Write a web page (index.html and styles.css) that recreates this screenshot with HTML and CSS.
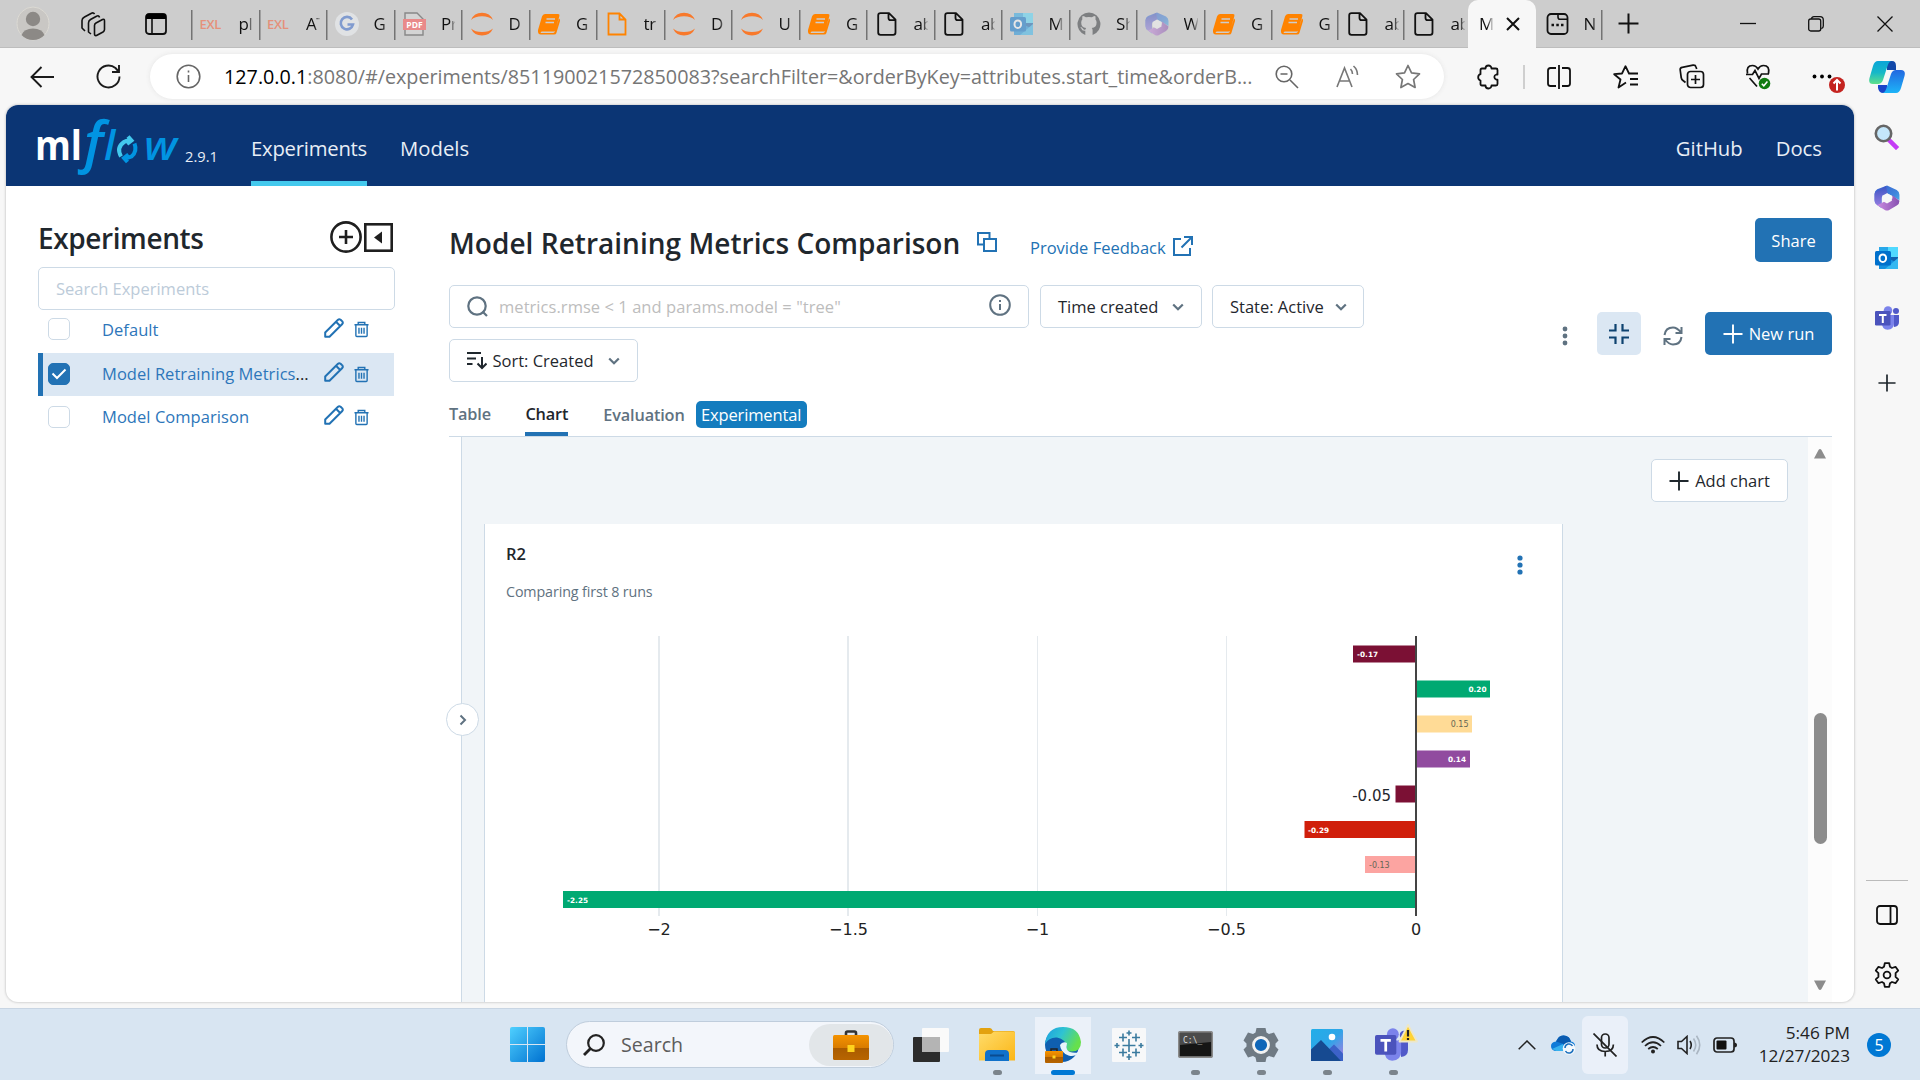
FILE: index.html
```html
<!DOCTYPE html>
<html lang="en">
<head>
<meta charset="utf-8">
<title>MLflow</title>
<link rel="stylesheet" href="styles.css">
</head>
<body>
<svg class="defs" width="0" height="0">
  <defs>
    <linearGradient id="gWin" x1="0" y1="0" x2="1" y2="1"><stop offset="0" stop-color="#4fd0ff"/><stop offset="1" stop-color="#0071d0"/></linearGradient>
    <linearGradient id="gCase" x1="0" y1="0" x2="0" y2="1"><stop offset="0" stop-color="#f59300"/><stop offset=".5" stop-color="#d97c00"/><stop offset=".52" stop-color="#a95b00"/><stop offset="1" stop-color="#b86500"/></linearGradient>
    <linearGradient id="gFold" x1="0" y1="0" x2="1" y2="1"><stop offset="0" stop-color="#ffdc6b"/><stop offset="1" stop-color="#fbb616"/></linearGradient>
    <linearGradient id="gEdge" x1="0" y1="0" x2="1" y2=".4"><stop offset="0" stop-color="#1b9de2"/><stop offset=".5" stop-color="#2fc3d2"/><stop offset="1" stop-color="#66e04c"/></linearGradient>
    <linearGradient id="gPhoto" x1="0" y1="0" x2="1" y2="1"><stop offset="0" stop-color="#22aee8"/><stop offset=".5" stop-color="#2fa5e8"/><stop offset="1" stop-color="#b378e0"/></linearGradient>
    <linearGradient id="gCopA" x1="0" y1="0" x2="0" y2="1"><stop offset="0" stop-color="#0aa5d8"/><stop offset=".5" stop-color="#16b8c8"/><stop offset="1" stop-color="#5fe08a"/></linearGradient>
    <linearGradient id="gCopB" x1="0" y1="0" x2="0" y2="1"><stop offset="0" stop-color="#2268e0"/><stop offset="1" stop-color="#1db4f8"/></linearGradient>
    <linearGradient id="gM1" x1="0" y1="0" x2="1" y2="1"><stop offset="0" stop-color="#3a5cd0"/><stop offset=".6" stop-color="#3f86dc"/><stop offset="1" stop-color="#4cc8f0"/></linearGradient>
    <linearGradient id="gM2" x1="0" y1="0" x2="1" y2="0"><stop offset="0" stop-color="#c98be0"/><stop offset="1" stop-color="#8750b0"/></linearGradient>
    <linearGradient id="gM3" x1="0" y1="0" x2="0" y2="1"><stop offset="0" stop-color="#3b50c0"/><stop offset="1" stop-color="#a77be0"/></linearGradient>
  </defs>
  <symbol id="book" viewBox="0 0 24 24"><path fill="#ff8300" d="M8 2h13q2 0 1.400 2l-4 14q-.5 1.500-2 1.500H5q-2 .3-1.200 1.500h12q1.500 0 2-1.600L22 6.500q1.400 1 1 2.400l-3.600 12Q19 22.500 17 22.500H4Q.5 22.500 1 18L5 4.500Q5.800 2 8 2z"/><path d="M9.500 7h8.500M8.500 10.500h8.500" stroke="#cdcdcd" stroke-width="1.500"/></symbol>
  <symbol id="jup" viewBox="0 0 24 24"><path fill="#f8792b" d="M1 8Q4 .8 12 .8T23 8Q19 4.300 12 4.300T1 8zM1 16.500Q4 23.500 12 23.500T23 16.500Q19 20 12 20T1 16.500z"/></symbol>
  <symbol id="file" viewBox="0 0 24 24"><path fill="none" stroke="currentColor" stroke-width="1.800" stroke-linejoin="round" d="M5.500 1.200h8.500l6.500 6.500v12.800q0 2.300-2.300 2.300H5.500q-2.300 0-2.300-2.300V3.500q0-2.300 2.300-2.300zM13.500 1.500v4.500q0 2.200 2.200 2.200h4.500"/></symbol>
  <symbol id="ofile" viewBox="0 0 24 24"><path fill="none" stroke="#ff8300" stroke-width="1.800" d="M3.500 1.500h11l6 6V22.500h-17zM14.500 1.500v6h6"/></symbol>
  <symbol id="m365" viewBox="0 0 24 24"><path fill="url(#gM1)" d="M12 .5 21 4.500Q23.500 6 23.500 9v5l-6-3.500-5.500-3-5 4v10L2.500 18Q.5 17 .5 14V8Q.5 5.500 3 4z"/><path fill="url(#gM3)" d="M2 6 11 1 12.500 7.500 7 11v7l-3.500 1Q.5 17 .5 14V8z" opacity=".8"/><path fill="url(#gM2)" d="M3 18.800 12 14l5-1.500v-3l6.500 5q0 3-2.500 4.500l-7 4q-2 1-4 0z"/><path fill="#f7f7f7" d="M12 7.500 16.500 10v4.500L12 17l-4.500-2.500V10z"/></symbol>
  <symbol id="outlook" viewBox="0 0 24 24"><path fill="#1490df" d="M4 1h19v22H4z"/><path fill="#28a8ea" d="M4 1h9v9H4z"/><path fill="#50d9ff" d="M13 1h10v10H13z"/><path fill="#0f62b0" d="M10 11h13v6z"/><path fill="#35b8f1" d="M10 23 23 12v11z"/><rect y="5" width="16" height="14.500" rx="1.500" fill="#0070cc"/><ellipse cx="7.800" cy="12.200" rx="3.300" ry="3.800" fill="none" stroke="#fff" stroke-width="2"/></symbol>
  <symbol id="teams" viewBox="0 0 24 24"><circle cx="13" cy="4.500" r="4.300" fill="#7b83eb"/><circle cx="21" cy="5" r="3" fill="#5059c9"/><path fill="#5059c9" d="M17 9h7v7q0 4.500-5 5z"/><path fill="#7b83eb" d="M7 9h12v8q0 6.500-6.500 6.800Q7 23.500 7 17z"/><rect y="5" width="15.500" height="14.500" rx="1.300" fill="#4b53bc"/><path d="M4 9h7.500M7.800 9v8" stroke="#fff" stroke-width="2"/></symbol>
  <symbol id="chev" viewBox="0 0 12 12"><path fill="none" stroke="#5f7281" stroke-width="2.200" d="M1.200 3.500 6 8.300l4.800-4.800"/></symbol>
  <symbol id="pencil" viewBox="0 0 20 20"><path fill="none" stroke="#2272b4" stroke-width="2" stroke-linejoin="round" d="M1.200 18.800v-4.300L14 1.700q1.200-1 2.600 0l1.700 1.700q1 1.300 0 2.600L5.500 18.800zM12 3.800l4.200 4.200"/></symbol>
  <symbol id="trash" viewBox="0 0 16 17"><path fill="none" stroke="#2272b4" stroke-width="1.500" d="M.5 3.500h15M4.500 3.300V1h7v2.300M2 3.500V15q0 1 1 1h10q1 0 1-1V3.500M5.300 6.500v6.500M8 6.500v6.500M10.700 6.500v6.500"/></symbol>
  <symbol id="plus" viewBox="0 0 20 20"><path fill="none" stroke="currentColor" stroke-width="1.900" d="M10 .5v19M.5 10h19"/></symbol>
</svg>

<header class="tabstrip">
  <div class="cell"><svg width="34" height="36" viewBox="0 0 34 36"><ellipse cx="17" cy="17.500" rx="16" ry="16.500" fill="#c9c7c4" stroke="#dcdad4"/><circle cx="17" cy="13" r="7.200" fill="#8c8986"/><path d="M5.500 29Q8 22.500 17 22.500T28.500 29Q24 34 17 34T5.500 29z" fill="#8c8986"/></svg></div>
  <div class="cell"><svg width="26" height="26" viewBox="0 0 26 26" fill="none" stroke="#111" stroke-width="1.600" stroke-linejoin="round"><path d="M22.500 8.500 16 12q-1.500.8-1.500 2.500V23q0 2 2 1.500l6.500-3.500q1.500-1 1.500-2.500v-8.500q0-2.500-2-1.500z"/><path d="M19.500 6.500q-.5-2.500-3-1.300L10.500 8.500Q8.500 9.700 8.500 12v9l2.500 2M14.500 3.200q-1-2-3-.9L4.500 6Q2 7.300 2 9.500V17l3 3"/></svg></div>
  <div class="cell"><svg width="22" height="22" viewBox="0 0 22 22"><rect x="1" y="1" width="20" height="20" rx="3" fill="none" stroke="#111" stroke-width="1.800"/><path d="M1 6V3q0-2 2-2h16q2 0 2 2v3z" fill="#000"/><path d="M7 6v15" stroke="#111" stroke-width="1.600"/></svg></div>
  <div class="tab"><b class="exl">EXL</b><span>pl</span></div>
  <div class="tab"><b class="exl">EXL</b><span>AT</span></div>
  <div class="tab"><svg class="fav" viewBox="0 0 24 24"><circle cx="12" cy="12" r="12" fill="#e0e2e4"/><path d="M17 7.500A6.200 6.200 0 1 0 18 12.500h-5.500" fill="none" stroke="#809bcf" stroke-width="2.600"/></svg><span>G</span></div>
  <div class="tab"><svg class="fav" viewBox="0 0 24 24"><path d="M3 1h12l6 6v16H3z" fill="#d4d4d4" stroke="#888" stroke-width="1.400"/><rect x="1" y="7" width="23" height="11" fill="#e98a8a"/><text x="12.500" y="15.700" font-size="8.500" font-weight="700" fill="#fff" text-anchor="middle">PDF</text></svg><span>Pr</span></div>
  <div class="tab"><svg class="fav"><use href="#jup"/></svg><span>D</span></div>
  <div class="tab"><svg class="fav"><use href="#book"/></svg><span>G</span></div>
  <div class="tab"><svg class="fav"><use href="#ofile"/></svg><span>tr</span></div>
  <div class="tab"><svg class="fav"><use href="#jup"/></svg><span>D</span></div>
  <div class="tab"><svg class="fav"><use href="#jup"/></svg><span>U</span></div>
  <div class="tab"><svg class="fav"><use href="#book"/></svg><span>G</span></div>
  <div class="tab"><svg class="fav"><use href="#file"/></svg><span>ab</span></div>
  <div class="tab"><svg class="fav"><use href="#file"/></svg><span>ab</span></div>
  <div class="tab"><svg class="fav faded"><use href="#outlook"/></svg><span>M</span></div>
  <div class="tab"><svg class="fav" viewBox="0 0 24 24"><path fill="#7d7f81" d="M12 .5a11.500 11.500 0 0 0-3.700 22.400v-4.200q-3.200.6-4-2.200-.5-1-1.200-1.400 1.900-.3 2.900 1.700 1 1.300 2.500.6.100-.8.600-1.400-4.900-.6-4.900-5.600 0-1.900 1.200-3.200-.4-1.600.2-3.200 1.400 0 3.300 1.300 3-.8 6 0 1.900-1.300 3.300-1.300.6 1.600.2 3.200 1.200 1.300 1.200 3.200 0 5-4.900 5.600.9.900.9 2.400v4.500A11.500 11.500 0 0 0 12 .5z"/></svg><span>Sh</span></div>
  <div class="tab"><svg class="fav faded"><use href="#m365"/></svg><span>W</span></div>
  <div class="tab"><svg class="fav"><use href="#book"/></svg><span>G</span></div>
  <div class="tab"><svg class="fav"><use href="#book"/></svg><span>G</span></div>
  <div class="tab"><svg class="fav"><use href="#file"/></svg><span>ab</span></div>
  <div class="tab"><svg class="fav"><use href="#file"/></svg><span>ab</span></div>
  <div class="tab active"><span>M</span><svg width="14" height="14" viewBox="0 0 14 14"><path d="M1 1l12 12M13 1 1 13" stroke="#111" stroke-width="2"/></svg></div>
  <div class="tab"><svg class="fav" viewBox="0 0 24 24"><rect x="2.500" y="2" width="20" height="20" rx="3.500" fill="none" stroke="#111" stroke-width="1.800"/><path d="M13 2v3q0 2.300 2 2.300h7" fill="none" stroke="#111" stroke-width="1.600"/><path d="M6.500 13h2.500M11.300 13h2.500M16 13h2.500" stroke="#111" stroke-width="2.500"/></svg><span>N</span></div>
  <div class="cell endtab"><svg width="21" height="21" viewBox="0 0 20 20"><use href="#plus"/></svg></div>
  <div></div>
  <div class="cell"><svg width="16" height="16"><path d="M0 7.500h16" stroke="#111" stroke-width="1.300"/></svg></div>
  <div class="cell"><svg width="16" height="16" viewBox="0 0 16 16" fill="none" stroke="#111" stroke-width="1.300"><rect x=".7" y="3" width="12" height="12" rx="2"/><path d="M3.500 2.800Q3.800.7 6 .7h6q3.300 0 3.300 3.300v6q0 2.200-2 2.700"/></svg></div>
  <div class="cell"><svg width="16" height="16"><path d="M.5.5l15 15M15.500.5l-15 15" stroke="#111" stroke-width="1.300"/></svg></div>
</header>

<div class="toolbar">
  <div class="cell"><svg width="25" height="22" viewBox="0 0 25 22" fill="none" stroke="#1b1b1b" stroke-width="1.900"><path d="M24 11H1.500M11.500 1l-10 10 10 10"/></svg></div>
  <div class="cell"><svg width="25" height="25" viewBox="0 0 25 25" fill="none" stroke="#1b1b1b" stroke-width="1.900"><path d="M23.500 12.500A11 11 0 1 1 19.500 4L23 8M23 1v7h-7"/></svg></div>
  <div class="address">
    <svg width="25" height="25" viewBox="0 0 25 25" fill="none" stroke="#666" stroke-width="1.600"><circle cx="12.500" cy="12.500" r="11.300"/><path d="M12.500 11v7M12.500 6.500v2"/></svg>
    <div class="url"><b>127.0.0.1</b>:8080/#/experiments/851190021572850083?searchFilter=&amp;orderByKey=attributes.start_time&amp;orderB...</div>
    <svg width="24" height="24" viewBox="0 0 24 24" fill="none" stroke="#666" stroke-width="1.600"><circle cx="9" cy="9" r="7.800"/><path d="M15 15l8 8M5.500 9h7"/></svg>
    <svg width="25" height="24" viewBox="0 0 25 24" fill="none" stroke="#777" stroke-width="1.600"><path d="M1 22 8.500 3 16 22M3.500 16h10M14.500 4q2 2 2 5M17.500 1q4 3.500 4 9"/></svg>
    <svg width="26" height="25" viewBox="0 0 26 25" fill="none" stroke="#777" stroke-width="1.700" stroke-linejoin="round"><path d="M13 1.500l3.500 7.400 8 1-5.900 5.600 1.500 8L13 19.600l-7.100 3.900 1.500-8L1.500 9.900l8-1z"/></svg>
  </div>
  <div class="cell"><svg width="24" height="26" viewBox="0 0 24 26" fill="none" stroke="#111" stroke-width="1.800" stroke-linejoin="round"><path d="M9.500 4.500a3 3 0 0 1 6 0H20q1.500 0 1.500 1.500v4.500h-1.200a2.700 2.700 0 0 0 0 5.200h1.200V20q0 1.500-1.500 1.500h-4.500a3 3 0 0 1-6 0H6Q4.500 21.500 4.500 20v-3.500a3.300 3.300 0 0 1 0-6.300V6q0-1.500 1.500-1.500z"/></svg></div>
  <div class="cell"><i class="vsep"></i></div>
  <div class="cell"><svg width="24" height="24" viewBox="0 0 24 24" fill="none" stroke="#111" stroke-width="1.800"><path d="M9 3H3.500Q1 3 1 5.500v13Q1 21 3.500 21H9M15 3h5.500Q23 3 23 5.500v13q0 2.500-2.500 2.500H15M12 0v24"/></svg></div>
  <div class="cell"><svg width="26" height="24" viewBox="0 0 26 24" fill="none" stroke="#111" stroke-width="1.800" stroke-linejoin="round"><path d="M13 17.500 5.500 22.500 7.500 14.500 1.200 9.200 9 8.500 12.500 1.200 16 8.500h9M17 14h8M17 19.500h8"/></svg></div>
  <div class="cell"><svg width="26" height="25" viewBox="0 0 26 25" fill="none" stroke="#111" stroke-width="1.700"><rect x="8.500" y="7.500" width="16" height="16" rx="3"/><path d="M16.500 11v9M12 15.500h9M6.500 18.500 4 16.500q-1.500-1-1.800-3L1.200 6q-.3-2.300 2-2.700L14 1.200q2.500-.3 3 1.800l.7 2"/></svg></div>
  <div class="cell"><svg width="26" height="26" viewBox="0 0 26 26" fill="none" stroke="#111" stroke-width="1.700"><path d="M2.500 9.500Q1 1.500 7.500 1.500q3.500 0 5.500 3.500 2-3.500 5.500-3.500 6.500 0 5 8M1 10.500h6.500l2.500-4 4 8 2.500-4.500h7.500M4.500 14l7.500 8.500"/><circle cx="19.500" cy="19.500" r="5.800" fill="#107c10" stroke="none"/><path d="M16.800 19.800l2 2 3.600-4.200" stroke="#fff" stroke-width="1.500"/></svg></div>
  <div class="cell more"><svg width="20" height="5"><circle cx="2.500" cy="2.500" r="1.900"/><circle cx="10" cy="2.500" r="1.900"/><circle cx="17.500" cy="2.500" r="1.900"/></svg><i class="update"><svg width="16" height="16" viewBox="0 0 16 16" fill="none" stroke="#fff" stroke-width="2"><path d="M8 13.500V3M4.500 6.500 8 3l3.500 3.500"/></svg></i></div>
  <div class="cell"><svg width="36" height="32" viewBox="0 0 36 32"><path fill="#1248a8" d="M18 0h5q4 0 4 5v4h-9z"/><path fill="#1a44c8" d="M9 24h9v8h-4q-4 0-5-5z"/><path fill="url(#gCopA)" d="M9 0h14q-3 0-4.500 5L14 19q-1.500 4-5 4H4q-5 0-3.500-6L4 5Q5.500 0 9 0z"/><path fill="url(#gCopB)" d="M27 9h5q5 0 3.500 6L32 27q-1.500 5-5 5H13q3 0 4.500-5L22 13q1.500-4 5-4z"/></svg></div>
</div>

<div class="middle">
  <main class="page">
    <nav class="nav">
      <svg class="logo" width="146" height="60" viewBox="0 0 146 60"><g font-weight="600"><text x="-2" y="45" font-size="41" font-weight="700" fill="#fff" textLength="47" lengthAdjust="spacingAndGlyphs">ml</text><g font-style="italic" fill="#0194e2"><text x="47" y="47" font-size="56">f</text><text x="67" y="45" font-size="41">l</text><text x="107" y="45" font-size="40" textLength="33" lengthAdjust="spacingAndGlyphs">w</text></g></g><path d="M84 41.500q-5-9 3-14.500 3-2 6-1.500M91 21.500l3.500 4-4.500 3.500" fill="none" stroke="#43c9ed" stroke-width="4"/><path d="M97.500 28.500q3 8-3 13-3 1.500-6.500 1.500M90.500 47l-3.500-4 4.500-3.500" fill="none" stroke="#0194e2" stroke-width="4"/></svg>
      <span class="version">2.9.1</span>
      <a class="on">Experiments</a><a>Models</a><span class="grow"></span><a>GitHub</a><a>Docs</a>
    </nav>
    <div class="content">
      <aside class="exps">
        <div class="exphead"><h2>Experiments</h2>
          <svg width="32" height="32" viewBox="0 0 32 32" fill="none" stroke="#1f1f1f" stroke-width="2.600"><circle cx="16" cy="16" r="14.600"/><path d="M16 9v14M9 16h14"/></svg>
          <svg width="29" height="29" viewBox="0 0 29 29"><rect x="1.300" y="1.300" width="26.400" height="26.400" fill="none" stroke="#1f1f1f" stroke-width="2.600"/><path d="M10 14.500l8-6v12z" fill="#1f1f1f"/></svg>
        </div>
        <div class="expsearch">Search Experiments</div>
        <div class="exp first"><i class="box"></i><a>Default</a><svg width="20" height="20"><use href="#pencil"/></svg><svg width="15" height="17"><use href="#trash"/></svg></div>
        <div class="exp sel"><i class="box"><svg width="16" height="12" viewBox="0 0 16 12"><path d="M1.500 5.500l4.500 4.500 8.500-8.500" fill="none" stroke="#fff" stroke-width="2"/></svg></i><a>Model Retraining Metrics<em>...</em></a><svg width="20" height="20"><use href="#pencil"/></svg><svg width="15" height="17"><use href="#trash"/></svg></div>
        <div class="exp"><i class="box"></i><a>Model Comparison</a><svg width="20" height="20"><use href="#pencil"/></svg><svg width="15" height="17"><use href="#trash"/></svg></div>
      </aside>
      <section class="main">
        <div class="titlebar">
          <h1>Model Retraining Metrics Comparison</h1>
          <svg class="copy" width="20" height="20" viewBox="0 0 20 20" fill="none" stroke="#2272b4" stroke-width="2"><rect x="1" y="1" width="11.500" height="11.500"/><rect x="7" y="7" width="12" height="12" fill="#fff"/></svg>
          <a class="feedback">Provide Feedback</a>
          <svg class="ext" width="20" height="20" viewBox="0 0 20 20" fill="none" stroke="#2272b4" stroke-width="2"><path d="M8 3H1v16h16v-7M11 1h8v8M19 1 8.500 11.500"/></svg>
          <span class="grow"></span><button class="primary share">Share</button>
        </div>
        <div class="controls">
          <div class="filters">
            <div class="search"><svg width="21" height="21" viewBox="0 0 21 21" fill="none" stroke="#5f7281" stroke-width="2.200"><circle cx="10" cy="10" r="8.700"/><path d="M15.500 15.500l4.500 4.500"/></svg><span>metrics.rmse &lt; 1 and params.model = "tree"</span><svg class="info" width="22" height="22" viewBox="0 0 22 22" fill="none" stroke="#5f7281" stroke-width="2"><circle cx="11" cy="11" r="9.800"/><path d="M11 10v6M11 6v2"/></svg></div>
            <button class="drop time">Time created<svg width="12" height="12"><use href="#chev"/></svg></button>
            <button class="drop state">State: Active<svg width="12" height="12"><use href="#chev"/></svg></button>
            <button class="drop sort"><svg width="20" height="19" viewBox="0 0 20 19" fill="none" stroke="#1f272d" stroke-width="2"><path d="M0 2h14M0 7.500h9M0 13h5.500M15 6v11M10.500 12.500 15 17l4.500-4.500"/></svg><span>Sort: Created</span><svg width="12" height="12"><use href="#chev"/></svg></button>
          </div>
          <div class="actions">
            <svg width="6" height="20" fill="#5f7281"><circle cx="3" cy="3" r="2.400"/><circle cx="3" cy="10" r="2.400"/><circle cx="3" cy="17" r="2.400"/></svg>
            <span class="compress"><svg width="20" height="20" viewBox="0 0 20 20" fill="none" stroke="#0e4370" stroke-width="2.200"><path d="M0 6.500h6.500V0M13.500 0v6.500H20M0 13.500h6.500V20M13.500 20v-6.500H20"/></svg></span>
            <svg class="refresh" width="20" height="20" viewBox="0 0 20 20" fill="none" stroke="#5f7281" stroke-width="2"><path d="M1.500 9Q2.500 1.500 10 1.500q4 0 8 5M18.500 1v6h-6M18.500 11Q17.500 18.500 10 18.500q-4 0-8-5M1.500 19v-6h6"/></svg>
            <button class="primary newrun"><svg width="20" height="20"><use href="#plus"/></svg>New run</button>
          </div>
        </div>
        <div class="tabs"><span>Table</span><span class="cur">Chart</span><span class="eval">Evaluation</span><span class="badge">Experimental</span></div>
        <div class="panel">
          <div class="gutter"><i class="expander"><svg width="10" height="12" viewBox="0 0 10 12"><path d="M2.500 1.500 7 6l-4.500 4.500" fill="none" stroke="#5f7281" stroke-width="2"/></svg></i></div>
          <div class="charts">
            <div class="addrow"><button class="add"><svg width="20" height="20"><use href="#plus"/></svg>Add chart</button></div>
            <div class="card">
              <div class="cardhead"><div><h3>R2</h3><p>Comparing first 8 runs</p></div>
                <svg width="6" height="20" fill="#2272b4"><circle cx="3" cy="3" r="2.600"/><circle cx="3" cy="10" r="2.600"/><circle cx="3" cy="17" r="2.600"/></svg></div>
              <svg class="plot" width="1077" height="320" viewBox="485 620 1077 320">
                <g fill="#e5eaee"><path d="M658 636h2v280h-2zM847 636h2v280h-2zM1037 636h1v280h-1zM1226 636h1v280h-1z"/></g>
                <g class="bars">
                  <path fill="#7b1034" d="M1353 645.500h63v17h-63z"/><path fill="#00a972" d="M1416 680.500h74v17h-74z"/><path fill="#ffdb96" d="M1416 715.500h56v17h-56z"/><path fill="#914b9f" d="M1416 750.500h54v17h-54z"/><path fill="#7b1034" d="M1395.500 785.500h20.500v17h-20.500z"/><path fill="#d01f0b" d="M1304.500 821h111.500v17h-111.500z"/><path fill="#fca4a1" d="M1365 856h51v17h-51z"/><path fill="#00a972" d="M563 891h853v17H563z"/>
                </g>
                <path d="M1415 636h2v280h-2z" fill="#444"/>
                <g class="small"><text x="1357" y="657">-0.17</text><text x="1486.500" y="692" text-anchor="end">0.20</text><text x="1468.500" y="727" text-anchor="end" class="dk">0.15</text><text x="1466" y="762" text-anchor="end">0.14</text><text x="1308" y="833">-0.29</text><text x="1369" y="868" class="dk">-0.13</text><text x="567" y="903">-2.25</text></g>
                <text x="1391" y="800.500" class="mid" text-anchor="end">-0.05</text>
                <g class="ticks"><text x="659" y="935">−2</text><text x="848.500" y="935">−1.5</text><text x="1037.500" y="935">−1</text><text x="1226.500" y="935">−0.5</text><text x="1416" y="935">0</text></g>
              </svg>
            </div>
          </div>
          <div class="scroll"><svg width="14" height="11"><path d="M1 10.500 5.500 2Q7 0 8.500 2L13 10.500z" fill="#8c8c8c"/></svg><i></i><svg width="14" height="11"><path d="M1 .5 5.500 9Q7 11 8.500 9L13 .5z" fill="#8c8c8c"/></svg></div>
        </div>
      </section>
    </div>
  </main>
  <aside class="rail">
    <svg width="26" height="26" viewBox="0 0 26 26"><path d="M16 17l6 6" stroke="#c43cf5" stroke-width="4.500" stroke-linecap="square"/><circle cx="9.500" cy="9.500" r="7.700" fill="#c4e7fb" stroke="#666" stroke-width="2.600"/></svg>
    <svg width="26" height="26"><use href="#m365"/></svg>
    <svg width="24" height="24"><use href="#outlook"/></svg>
    <svg width="24" height="24"><use href="#teams"/></svg>
    <svg width="18" height="18"><use href="#plus"/></svg>
    <i></i>
    <svg width="22" height="20" viewBox="0 0 22 20" fill="none" stroke="#111" stroke-width="1.800"><rect x="1" y="1" width="20" height="18" rx="3"/><path d="M14.500 1v18"/></svg>
    <svg width="26" height="26" viewBox="0 0 26 26" fill="none" stroke="#111" stroke-width="1.800" stroke-linejoin="round"><circle cx="13" cy="13" r="3.400"/><path d="M10.800 1.200h4.400l.8 3.600 2 1.200 3.500-1.200 2.700 3.800-2.600 2.500v3.800l2.600 2.500-2.700 3.800-3.500-1.200-2 1.200-.8 3.600h-4.400L10 21.200 8 20l-3.500 1.200-2.700-3.800 2.600-2.500v-3.800L1.800 8.600l2.700-3.800L8 6l2-1.200z"/></svg>
  </aside>
</div>

<footer class="taskbar">
  <div></div>
  <div class="cell"><svg width="35" height="35" viewBox="0 0 35 35" fill="url(#gWin)"><path d="M2 0h15v17H0V2q0-2 2-2zM18 0h15q2 0 2 2v15H18zM0 18h17v17H2q-2 0-2-2zM18 18h17v15q0 2-2 2H18z"/></svg></div>
  <div class="tsearch"><svg width="22" height="22" viewBox="0 0 22 22" fill="none" stroke="#222" stroke-width="2.200"><circle cx="13" cy="9" r="7.800"/><path d="M7.500 14.500 1 21" stroke-width="2.800"/></svg><span>Search</span><i><svg width="36" height="30" viewBox="0 0 36 30"><path d="M13 5V3q0-1.500 1.500-1.500h7Q23 1.500 23 3v2" fill="none" stroke="#333" stroke-width="2.600"/><rect y="5" width="36" height="25" rx="1.500" fill="url(#gCase)"/><rect x="14.500" y="15" width="7" height="7" fill="#ffd21c"/></svg></i></div>
  <div class="cell"><svg width="36" height="34" viewBox="0 0 36 34"><rect y="9" width="27" height="25" rx="1" fill="#2c2c2c"/><rect x="9" width="27" height="24" rx="1" fill="#fafafa"/><path d="M9 9h18v15H9z" fill="#b4b4b4"/></svg></div>
  <div class="cell dot"><svg width="36" height="33" viewBox="0 0 36 33"><path d="M0 2Q0 0 2 0h9q1.500 0 3 3h20q2 0 2 2v5H0z" fill="#e3a20f"/><path d="M0 6h12l3-2.500h19.500q1.500 0 1.500 1.500v27.500H0z" fill="url(#gFold)"/><path d="M6 33v-7q0-4 4-4h16q4 0 4 4v7z" fill="#1071ca"/><path d="M11 27.500h14" stroke="#0a4c90" stroke-width="2"/></svg></div>
  <div class="cell dot run"><svg width="36" height="36" viewBox="0 0 36 36"><circle cx="17" cy="18" r="17" fill="#0f5fb0"/><path d="M0 17Q2 0 18 0t18 15q0 10-10 9.500-5-.2-4.500-4Q21 12 12 10.500 4 10 0 17z" fill="url(#gEdge)"/><path d="M15 18a5.500 5.500 0 0 1 7-2q-1 4.500 0 6.500 2.500 4 11.500 3-4 5-10 3-8-3-8.500-10.500z" fill="#e8f4fb"/><rect y="24" width="18" height="12" rx="1" fill="url(#gCase)"/><path d="M7.500 28.500h3v3h-3z" fill="#ffd21c"/><path d="M6 24v-2h6v2" fill="none" stroke="#222" stroke-width="1.500"/></svg></div>
  <div class="cell"><svg width="34" height="34" viewBox="0 0 34 34"><rect width="34" height="34" rx="1" fill="#f7f8f9"/><path d="M17 11v13M10.500 17.500h13M11 5.500v8M7 9.500h8M24 5.500v8M20 9.500h8M11 20.500v8M7 24.500h8M24 20.500v8M20 24.500h8M17 2.500v5M14.500 5h5M17 26v6M14.500 29h5M5 15v5M2.500 17.500h5M29 15v5M26.500 17.500h5" stroke="#3b7b9f" stroke-width="1.600"/></svg></div>
  <div class="cell dot"><svg width="35" height="27" viewBox="0 0 35 27"><rect x=".8" y=".8" width="33.400" height="25.400" rx="1.500" fill="#151515" stroke="#8a8a8a" stroke-width="1.800"/><path d="M2 2h31v9L2 14z" fill="#4b4b4b"/><text x="5" y="12" class="mono">C:\_</text></svg></div>
  <div class="cell dot"><svg width="36" height="34" viewBox="0 0 36 34"><path fill="#6f7a84" d="M13.500 0h9l1 4.500 2.500 1.500 5-1.500 4.500 8-3 3v3l3 3-4.500 8-5-1.500-2.500 1.500-1 4.500h-9l-1-4.500-2.500-1.500-5 1.500-4.500-8 3-3v-3l-3-3 4.500-8 5 1.500L12.500 4.500z"/><circle cx="18" cy="17" r="7.500" fill="#1066b8" stroke="#f2f2f2" stroke-width="2.800"/></svg></div>
  <div class="cell dot"><svg width="32" height="32" viewBox="0 0 32 32"><rect width="32" height="32" rx="1.500" fill="url(#gPhoto)"/><path d="M16 22 23 15.500l9 9V32H16z" fill="#3c62c8"/><path d="M0 20.500 10 11l20 21H0z" fill="#164a91"/><circle cx="21" cy="8" r="3.300" fill="#fff"/></svg></div>
  <div class="cell dot warn"><svg width="44" height="38" viewBox="0 0 44 38"><use href="#teams" x="0" y="4" width="35" height="33"/><path d="M34 .8 43 17.500H25.500z" fill="#ffd335" stroke="#ede7c8" stroke-width="1.800" stroke-linejoin="round"/><path d="M34 6v6.500M34 14v2" stroke="#222" stroke-width="2.200"/></svg></div>
  <div></div>
  <div class="cell"><svg width="18" height="10" viewBox="0 0 18 10"><path d="M.7 9.300 9 1l8.300 8.300" fill="none" stroke="#222" stroke-width="1.500"/></svg></div>
  <div class="cell"><svg width="25" height="20" viewBox="0 0 25 20"><path d="M4 16q-4-1-4-5t5-4.500Q7.500 0 13 .5t7 6q4 .8 4 4.500t-4 5z" fill="#0f7bd8"/><path d="M5 6.500 8 2q5-3 10 .5l2 4-6 3z" fill="#0a5bb0"/><path d="M1 14 12 9l2 7H5z" fill="#37b1ee"/><circle cx="18" cy="13.500" r="6.300" fill="#f4f8fc"/><path d="M14 13a4 4 0 0 1 7.500-2M22 14a4 4 0 0 1-7.500 2" fill="none" stroke="#1b6fbd" stroke-width="1.500"/></svg></div>
  <div class="cell"><span class="mic"><svg width="24" height="24" viewBox="0 0 24 24" fill="none" stroke="#222" stroke-width="1.700"><rect x="8.500" y="1" width="7.500" height="14" rx="3.700"/><path d="M4 11.500q0 7 8.200 7t8.200-7M12.200 18.500v5M.5.500l23 23"/></svg></span></div>
  <div class="cell"><svg width="24" height="18" viewBox="0 0 24 18" fill="none" stroke="#222" stroke-width="1.700"><path d="M.7 6.500Q12-4.500 23.300 6.500M4 10q8-7.500 16 0M7.200 13q4.800-4 9.600 0"/><circle cx="12" cy="15.500" r="2" fill="#222" stroke="none"/></svg></div>
  <div class="cell"><svg width="24" height="20" viewBox="0 0 24 20" fill="none" stroke="#222" stroke-width="1.600"><path d="M1 6.500h3.500L10 1.500v17L4.500 13.500H1zM13 6q2.500 4 0 8"/><path d="M16.500 3.500q4.500 6.500 0 13M19.500.7q6.500 9.300 0 18.600" stroke="#aab6c2"/></svg></div>
  <div class="cell"><svg width="24" height="16" viewBox="0 0 24 16"><rect x="1" y="1" width="20" height="14" rx="3" fill="none" stroke="#222" stroke-width="1.700"/><rect x="3.500" y="3.500" width="10" height="9" rx="1" fill="#111"/><path d="M21 5.500q3 0 3 2.500t-3 2.500z" fill="#222"/></svg></div>
  <div class="clock">5:46 PM<br>12/27/2023</div>
  <div class="cell"><span class="count">5</span></div>
</footer>
</body>
</html>
```
FILE: styles.css
```css
* { box-sizing: border-box; }
body { margin: 0; width: 1920px; height: 1080px; overflow: hidden; display: flex; flex-direction: column; background: #f7f7f7; font-family: "Open Sans", "Noto Sans", sans-serif; color: #1f272d; font-size: 16.5px; }
svg { display: block; flex: none; }
.defs { position: absolute; }
button, h1, h2, h3, p { margin: 0; font: inherit; color: inherit; }
i, em { font-style: normal; }
.cell { display: flex; align-items: center; justify-content: center; }
.grow { flex: 1; }

/* browser tabs */
.tabstrip { height: 48px; flex: none; background: #cdcdcd; border-bottom: 1px solid #bdbdbd; display: grid; grid-template-columns: 65px 55px 71px repeat(16, 67.5px) 66px 66px 65px 68px 65px 54px 1fr 69px 68px 70px; color: #111; }
.tab { display: flex; align-items: center; border-left: 1.5px solid transparent; background: linear-gradient(#747474, #747474) no-repeat 0 10px / 1.5px 30px; background-origin: border-box; overflow: hidden; padding-left: 7.5px; }
.tab span { margin-left: 15px; width: 14px; overflow: hidden; white-space: nowrap; font-size: 17px; line-height: 24px; letter-spacing: -.4px; -webkit-mask-image: linear-gradient(90deg, #000 60%, rgba(0,0,0,.15)); }
.fav { width: 24px; height: 24px; }
.faded { opacity: .5; }
.exl { width: 24px; font-size: 13px; color: #e5917a; font-weight: 600; letter-spacing: -.3px; white-space: nowrap; }
.tab.active { background: #f7f7f7; border: 0; border-radius: 10px 10px 0 0; margin-bottom: -1px; padding-left: 11px; }
.tab.active span { margin: 0 13px 0 0; }
.tab.active + .tab { background: none; }
.endtab { background: linear-gradient(#747474, #747474) no-repeat 0 10px / 1.5px 30px; }

/* address bar */
.toolbar { height: 57px; flex: none; display: grid; grid-template-columns: 84px 48px 1323px 66px 5px 66px 67px 66px 65px 64px 66px; }
.address { margin: 6px 11px 6px 18px; background: #fff; border-radius: 23px; box-shadow: 0 0 5px #e4e4e4; display: grid; grid-template-columns: 48px 1051px 61px 59px 26px; align-items: center; padding-left: 26px; }
.url { font-size: 19.75px; color: #767676; white-space: nowrap; }
.url b { font-weight: 400; color: #000; }
.vsep { width: 2px; height: 24px; background: #cfcfcf; }
.more { position: relative; }
.update { position: absolute; left: 39px; top: 29px; width: 16px; height: 16px; border-radius: 8px; background: #c42420; }

/* page frame */
.middle { height: 903px; flex: none; display: flex; padding-left: 6px; }
.page { width: 1848px; height: 897px; background: #fff; border-radius: 12px; overflow: hidden; display: flex; flex-direction: column; box-shadow: 0 0 2px 1px #d6d6d6; }
.nav { height: 81px; flex: none; background: #0b3574; display: flex; padding: 0 32px 0 31px; color: #e8eef6; font-size: 20.3px; }
.nav a { height: 81px; line-height: 87px; margin-left: 33px; }
.nav a.on { border-bottom: 5px solid #43c9ed; margin-left: 31px; letter-spacing: -.23px; }
.logo { margin-top: 10px; }
.version { font-size: 14.7px; width: 35px; line-height: 102px; margin-left: 2px; }
.content { flex: 1; display: flex; min-height: 0; }

/* experiment list */
.exps { width: 443px; padding: 34px 54px 0 32px; flex: none; }
.exphead { display: flex; align-items: center; height: 36px; margin-bottom: 11px; padding: 0 2px 2px 0; gap: 2px; }
.exphead h2 { flex: 1; font-size: 28px; font-weight: 600; line-height: 36px; padding: 2px 0 0 0; letter-spacing: -.4px; }
.expsearch { height: 43px; border: 1px solid #cddae6; border-radius: 5px; line-height: 41px; padding-left: 17px; color: #bccbd9; }
.exp { height: 43px; display: flex; align-items: center; border-left: 5px solid transparent; padding: 0 0 2px 5px; margin-right: 1px; }
.exp.first { padding-bottom: 5px; }
.exp.sel { background: #dbe7f3; border-color: #2272b4; }
.exp .box { width: 22px; height: 22px; border: 1px solid #cddae6; border-radius: 5px; background: #fff; display: grid; place-items: center; }
.exp.sel .box { background: #2272b4; border-color: #2272b4; }
.exp a { width: 221px; margin-left: 32px; color: #2d76ba; white-space: nowrap; letter-spacing: .05px; }
.exp em { color: #222; }
.exp > svg { margin-top: -3px; margin-left: 1px; }
.exp > svg + svg { margin: 1px 0 0 10px; }

/* main column */
.main { width: 1383px; display: flex; flex-direction: column; }
.titlebar { display: flex; height: 99px; padding-top: 32px; align-items: flex-start; }
h1 { font-size: 28px; font-weight: 600; line-height: 50px; width: 528px; white-space: nowrap; letter-spacing: .03px; }
.copy { margin-top: 14px; }
.feedback { color: #2272b4; margin: 17px 0 0 33px; line-height: 26px; width: 143px; white-space: nowrap; }
.ext { margin-top: 18px; }
.primary { background: #2272b4; color: #fff; border: 0; border-radius: 5px; height: 43px; display: flex; align-items: center; justify-content: center; white-space: nowrap; }
.share { width: 77px; height: 44px; }
.controls { display: flex; justify-content: space-between; }
.filters { display: flex; flex-wrap: wrap; width: 930px; gap: 11px; align-content: flex-start; }
.search, .drop, .add { height: 43px; border: 1px solid #cddae6; border-radius: 5px; background: #fff; display: flex; align-items: center; white-space: nowrap; }
.search { width: 580px; padding: 0 17px; color: #bdbdbd; }
.search span { flex: 1; margin-left: 11px; letter-spacing: .05px; }
.info { margin-top: -4px; }
.drop { justify-content: space-between; padding: 0 17px; }
.time { width: 162px; margin-right: -1px; }
.state { width: 152px; padding: 0 16px 0 17px; }
.sort { width: 189px; }
.sort span { margin: 0 9px 0 0; }
.actions { display: flex; align-items: center; height: 43px; margin-top: 27px; }
.compress { width: 44px; height: 43px; border-radius: 5px; background: #dbe7f3; display: grid; place-items: center; margin: 0 22px 0 29px; }
.actions > svg, .refresh { margin-top: 5px; }
.newrun { width: 127px; gap: 6px; margin-left: 22px; }
.tabs { height: 55px; flex: none; border-bottom: 1.5px solid #cddae6; display: flex; align-items: flex-end; font-weight: 600; font-size: 16.3px; letter-spacing: -.15px; color: #5f7281; }
.tabs span { height: 40px; line-height: 37px; }
.tabs .cur { margin: 0 35px 0 34.5px; color: #1f272d; border-bottom: 4px solid #2272b4; }
.tabs .badge { height: 27px; line-height: 27px; width: 111px; text-align: center; margin: 0 0 8px 11px; background: #147cbe; color: #fff; border-radius: 5px; font-weight: 400; font-size: 16.5px; }
.tabs .eval { line-height: 39px; }
.panel { flex: 1; display: flex; min-height: 0; }
.gutter { width: 13px; border-right: 1px solid #cddae6; position: relative; }
.expander { position: absolute; left: -3px; top: 266px; width: 33px; height: 33px; border: 1px solid #cddae6; border-radius: 50%; background: #fff; display: grid; place-items: center; z-index: 1; }
.charts { width: 1346px; background: #f1f5f8; padding: 22px 20px 0 22px; }
.addrow { display: flex; justify-content: flex-end; margin-bottom: 22px; }
.add { width: 137px; justify-content: center; gap: 6px; }
.card { width: 1079px; height: 480px; background: #fff; border: 1px solid #cddae6; border-width: 0 1px; }
.cardhead { height: 96px; display: flex; justify-content: space-between; padding: 17px 39px 0 21px; }
.cardhead > svg { margin-top: 14px; }
h3 { font-size: 16.5px; font-weight: 600; line-height: 26px; }
.cardhead p { font-size: 14.3px; letter-spacing: -.12px; line-height: 24px; margin-top: 13px; color: #5f7281; }
.plot { font-family: "DejaVu Sans", sans-serif; }
.small { font-size: 7.3px; font-weight: 700; fill: #fff; }
.dk { fill: #665; font-weight: 400; font-size: 8px; }
.mid { font-size: 15px; fill: #1f272d; }
.ticks { font-size: 16px; fill: #222; text-anchor: middle; }
.scroll { width: 24px; background: #fcfcfc; display: flex; flex-direction: column; align-items: center; padding: 11px 0; }
.scroll i { width: 13px; height: 131px; border-radius: 7px; background: #8c8c8c; margin: 254px 0 136px; flex: none; }

/* browser side rail */
.rail { width: 66px; display: grid; grid-template-rows: 63px 60px 60px 60px 70px 463px 68px 52px; justify-items: center; align-items: center; }
.rail i { width: 42px; height: 1px; background: #bbb; align-self: end; }

/* taskbar */
.taskbar { height: 72px; flex: none; background: #d8e5f2; border-top: 1px solid #c8d5e3; display: grid; grid-template-columns: 494px 66px 338px 66px 66px 66px 66px 66px 66px 66px 66px 83px 36px 37px 46px 49px 24px 48px 108px 44px; align-items: center; }
.taskbar .cell { height: 71px; }
.tsearch { margin-left: 6px; width: 328px; height: 47px; border: 1.5px solid #bfcddc; border-radius: 24px; background: #f3f6fb; display: flex; align-items: center; padding-left: 16px; color: #5c5c5c; font-size: 19.6px; }
.tsearch span { flex: 1; margin-left: 16px; }
.tsearch i { width: 84px; height: 42px; border-radius: 21px; background: #e2e6e9; display: grid; place-items: center; }
.dot { position: relative; }
.dot::after { content: ""; position: absolute; bottom: 5px; width: 9px; height: 5px; border-radius: 3px; background: #7b848c; }
.dot.run { background: linear-gradient(#ebf1f9, #ebf1f9) no-repeat center 8px / 56px 57px; }
.dot.run::after { width: 24px; background: #0078d4; }
.warn svg { margin: 0 0 4px 6px; }
.mono { font: 8px "DejaVu Sans Mono", monospace; fill: #ddd; }
.mic { width: 48px; height: 58px; background: #eaf0f9; border-radius: 6px; display: grid; place-items: center; }
.clock { text-align: right; font-size: 17.2px; line-height: 23px; color: #222; padding: 0 7px 2px 0; white-space: nowrap; }
.count { width: 24px; height: 24px; border-radius: 12px; background: #0078d4; color: #fff; font-size: 16px; line-height: 24px; text-align: center; }
```
